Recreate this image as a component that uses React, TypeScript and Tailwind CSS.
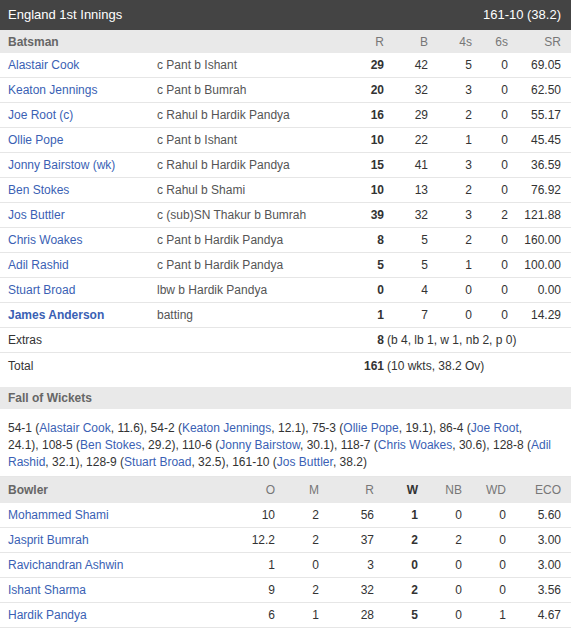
import React from "react";

type Bat = {
  name: string;
  out: string;
  r: string;
  b: string;
  fours: string;
  sixes: string;
  sr: string;
  bold?: boolean;
};

const batting: Bat[] = [
  { name: "Alastair Cook", out: "c Pant b Ishant", r: "29", b: "42", fours: "5", sixes: "0", sr: "69.05" },
  { name: "Keaton Jennings", out: "c Pant b Bumrah", r: "20", b: "32", fours: "3", sixes: "0", sr: "62.50" },
  { name: "Joe Root (c)", out: "c Rahul b Hardik Pandya", r: "16", b: "29", fours: "2", sixes: "0", sr: "55.17" },
  { name: "Ollie Pope", out: "c Pant b Ishant", r: "10", b: "22", fours: "1", sixes: "0", sr: "45.45" },
  { name: "Jonny Bairstow (wk)", out: "c Rahul b Hardik Pandya", r: "15", b: "41", fours: "3", sixes: "0", sr: "36.59" },
  { name: "Ben Stokes", out: "c Rahul b Shami", r: "10", b: "13", fours: "2", sixes: "0", sr: "76.92" },
  { name: "Jos Buttler", out: "c (sub)SN Thakur b Bumrah", r: "39", b: "32", fours: "3", sixes: "2", sr: "121.88" },
  { name: "Chris Woakes", out: "c Pant b Hardik Pandya", r: "8", b: "5", fours: "2", sixes: "0", sr: "160.00" },
  { name: "Adil Rashid", out: "c Pant b Hardik Pandya", r: "5", b: "5", fours: "1", sixes: "0", sr: "100.00" },
  { name: "Stuart Broad", out: "lbw b Hardik Pandya", r: "0", b: "4", fours: "0", sixes: "0", sr: "0.00" },
  { name: "James Anderson", out: "batting", r: "1", b: "7", fours: "0", sixes: "0", sr: "14.29", bold: true },
];

const bowling = [
  ["Mohammed Shami", "10", "2", "56", "1", "0", "0", "5.60"],
  ["Jasprit Bumrah", "12.2", "2", "37", "2", "2", "0", "3.00"],
  ["Ravichandran Ashwin", "1", "0", "3", "0", "0", "0", "3.00"],
  ["Ishant Sharma", "9", "2", "32", "2", "0", "0", "3.56"],
  ["Hardik Pandya", "6", "1", "28", "5", "0", "1", "4.67"],
];

const link = "text-[#3a5fb4]";
const batGrid = "grid grid-cols-[149px_1fr_50px_44px_44px_36px_53px] items-center pl-2 pr-[10px]";
const bowlGrid = "grid grid-cols-[1fr_44px_44px_55px_44px_44px_44px_55px] items-center pl-2 pr-[10px]";

function P({ children }: { children: React.ReactNode }) {
  return <span className={link}>{children}</span>;
}

export default function App() {
  return (
    <div className="w-[571px] bg-white text-[12px] text-[#333] font-['Liberation_Sans',Arial,sans-serif]">
      <div className="flex h-[30px] items-center justify-between bg-[#444444] pl-2 pr-[10px] text-[13px] text-white">
        <span>England 1st Innings</span>
        <span>161-10 (38.2)</span>
      </div>

      <div className={`${batGrid} h-[23px] bg-[#e9e9e9] text-[#777]`}>
        <span className="font-bold text-[#666]">Batsman</span>
        <span />
        <span className="text-right">R</span>
        <span className="text-right">B</span>
        <span className="text-right">4s</span>
        <span className="text-right">6s</span>
        <span className="text-right">SR</span>
      </div>

      {batting.map((p) => (
        <div key={p.name} className={`${batGrid} h-[25px] border-b border-[#e6e6e6]`}>
          <span className={`${link} ${p.bold ? "font-bold" : ""}`}>{p.name}</span>
          <span className="whitespace-nowrap text-[#555]">{p.out}</span>
          <span className="text-right font-bold">{p.r}</span>
          <span className="text-right">{p.b}</span>
          <span className="text-right">{p.fours}</span>
          <span className="text-right">{p.sixes}</span>
          <span className="text-right">{p.sr}</span>
        </div>
      ))}

      <div className={`${batGrid} h-[25px] border-b border-[#e6e6e6]`}>
        <span className="col-span-2">Extras</span>
        <span className="text-right font-bold">8</span>
        <span className="col-span-4 whitespace-nowrap pl-[3px]">(b 4, lb 1, w 1, nb 2, p 0)</span>
      </div>
      <div className={`${batGrid} h-[25px]`}>
        <span className="col-span-2">Total</span>
        <span className="text-right font-bold">161</span>
        <span className="col-span-4 whitespace-nowrap pl-[3px]">(10 wkts, 38.2 Ov)</span>
      </div>

      <div className="mt-[9px] flex h-[22px] items-center bg-[#e9e9e9] px-2 font-bold text-[#666]">
        Fall of Wickets
      </div>
      <div className="border-b border-[#e6e6e6] px-2 pb-[5px] pt-[11px] leading-[17px] whitespace-nowrap">
        54-1 (<P>Alastair Cook</P>, 11.6), 54-2 (<P>Keaton Jennings</P>, 12.1), 75-3 (<P>Ollie Pope</P>, 19.1), 86-4 (<P>Joe Root</P>,
        <br />
        24.1), 108-5 (<P>Ben Stokes</P>, 29.2), 110-6 (<P>Jonny Bairstow</P>, 30.1), 118-7 (<P>Chris Woakes</P>, 30.6), 128-8 (<P>Adil</P>
        <br />
        <P>Rashid</P>, 32.1), 128-9 (<P>Stuart Broad</P>, 32.5), 161-10 (<P>Jos Buttler</P>, 38.2)
      </div>

      <div className={`${bowlGrid} h-[26px] bg-[#e9e9e9] text-[#777]`}>
        <span className="font-bold text-[#666]">Bowler</span>
        <span className="text-right">O</span>
        <span className="text-right">M</span>
        <span className="text-right">R</span>
        <span className="text-right font-bold text-[#333]">W</span>
        <span className="text-right">NB</span>
        <span className="text-right">WD</span>
        <span className="text-right">ECO</span>
      </div>
      {bowling.map((b) => (
        <div key={b[0]} className={`${bowlGrid} h-[25px] border-b border-[#e6e6e6]`}>
          <span className={link}>{b[0]}</span>
          <span className="text-right">{b[1]}</span>
          <span className="text-right">{b[2]}</span>
          <span className="text-right">{b[3]}</span>
          <span className="text-right font-bold">{b[4]}</span>
          <span className="text-right">{b[5]}</span>
          <span className="text-right">{b[6]}</span>
          <span className="text-right">{b[7]}</span>
        </div>
      ))}
    </div>
  );
}
